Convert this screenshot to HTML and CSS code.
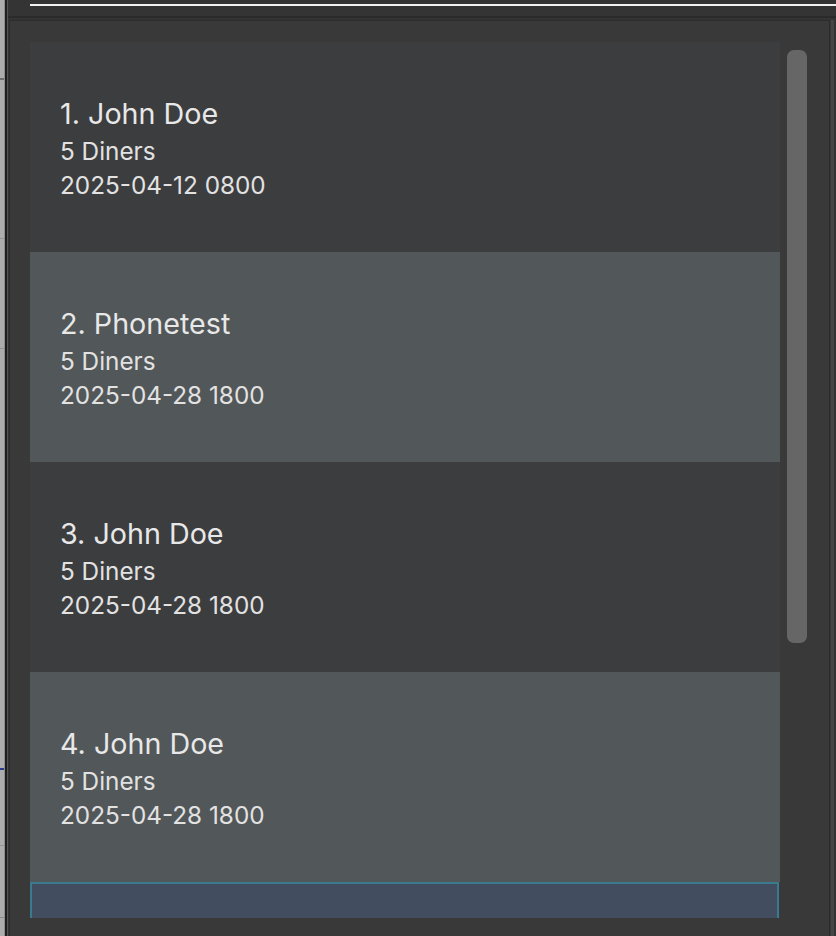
FILE: index.html
```html
<!DOCTYPE html>
<html lang="en">
<head>
<meta charset="utf-8">
<title>Reservations</title>
<link rel="stylesheet" href="styles.css">
</head>
<body>
<div class="app">
  <div class="edge"></div>
  <div class="divider"></div>
  <div class="main">
    <div class="topbar"><div class="tab-line"></div></div>
    <div class="sep"></div>
    <div class="body">
      <div class="panel">
        <div class="list">
          <div class="cell dark">
            <div class="name">1. John Doe</div>
            <div class="detail">5 Diners</div>
            <div class="detail">2025-04-12 0800</div>
          </div>
          <div class="cell light">
            <div class="name">2. Phonetest</div>
            <div class="detail">5 Diners</div>
            <div class="detail">2025-04-28 1800</div>
          </div>
          <div class="cell dark">
            <div class="name">3. John Doe</div>
            <div class="detail">5 Diners</div>
            <div class="detail">2025-04-28 1800</div>
          </div>
          <div class="cell light">
            <div class="name">4. John Doe</div>
            <div class="detail">5 Diners</div>
            <div class="detail">2025-04-28 1800</div>
          </div>
          <div class="cell selected"></div>
        </div>
        <div class="scrollbar"><div class="thumb"></div></div>
      </div>
      <div class="rail"></div>
    </div>
  </div>
</div>
</body>
</html>
```

FILE: styles.css
```css
* { box-sizing: border-box; }
html, body { margin: 0; padding: 0; }
body {
  background: #343434;
  font-family: "Inter", "Roboto", "Liberation Sans", sans-serif;
  overflow: hidden;
}
.app {
  display: flex;
  width: 836px;
  height: 936px;
  overflow: hidden;
}
.edge {
  width: 5px;
  border-right: 1px solid #8c8c8c;
  background: linear-gradient(to bottom,
    #adadad 0, #adadad 78px,
    #6e6e6e 78px, #6e6e6e 80px,
    #adadad 80px, #adadad 238px,
    #949494 238px, #949494 239px,
    #adadad 239px, #adadad 348px,
    #949494 348px, #949494 349px,
    #adadad 349px, #adadad 768px,
    #2a3c8e 768px, #2a3c8e 770px,
    #adadad 770px, #adadad 845px,
    #949494 845px, #949494 846px,
    #adadad 846px, #adadad 917px,
    #8a8a8a 917px, #8a8a8a 918px,
    #adadad 918px);
}
.divider {
  width: 3px;
  background: #1e1e1e;
  border-right: 1px solid #565656;
}
.main {
  flex: 1;
  display: flex;
  flex-direction: column;
  background: #343434;
}
.topbar {
  height: 16px;
  padding: 4px 0 0 22px;
}
.tab-line {
  height: 2px;
  background: #f2f2f2;
}
.sep {
  height: 2px;
  background: #2a2a2a;
  margin-bottom: 2px;
}
.body {
  flex: 1;
  display: flex;
}
.panel {
  margin-left: 1px;
  width: 821px;
  border: 1px solid #2c2c2c;
  border-bottom: none;
  background: #393939;
  padding: 21px 0 0 20px;
  display: flex;
  align-items: flex-start;
}
.list {
  width: 750px;
  height: 876px;
  overflow: hidden;
}
.cell {
  height: 210px;
  padding: 54px 0 0 30px;
  color: #e4e4e4;
}
.cell.dark { background: #3c3d3f; }
.cell.light { background: #525759; }
.cell.selected {
  background: #424e5f;
  border: 2px solid #3a7a8e;
  border-bottom: none;
  margin-right: 1px;
}
.name {
  font-size: 28.7px;
  line-height: 36px;
  margin-bottom: 1.5px;
  color: #e8e8e8;
}
.detail {
  font-size: 24.3px;
  line-height: 34.2px;
  color: #e2e2e2;
}
.scrollbar {
  flex: 1;
  padding: 8px 0 0 7px;
}
.thumb {
  width: 20px;
  height: 593px;
  border-radius: 7px;
  background: #666666;
}
.rail {
  width: 6px;
  border-left: 1px solid #383838;
  border-right: 2px solid #333333;
  background: #464646;
}
```
